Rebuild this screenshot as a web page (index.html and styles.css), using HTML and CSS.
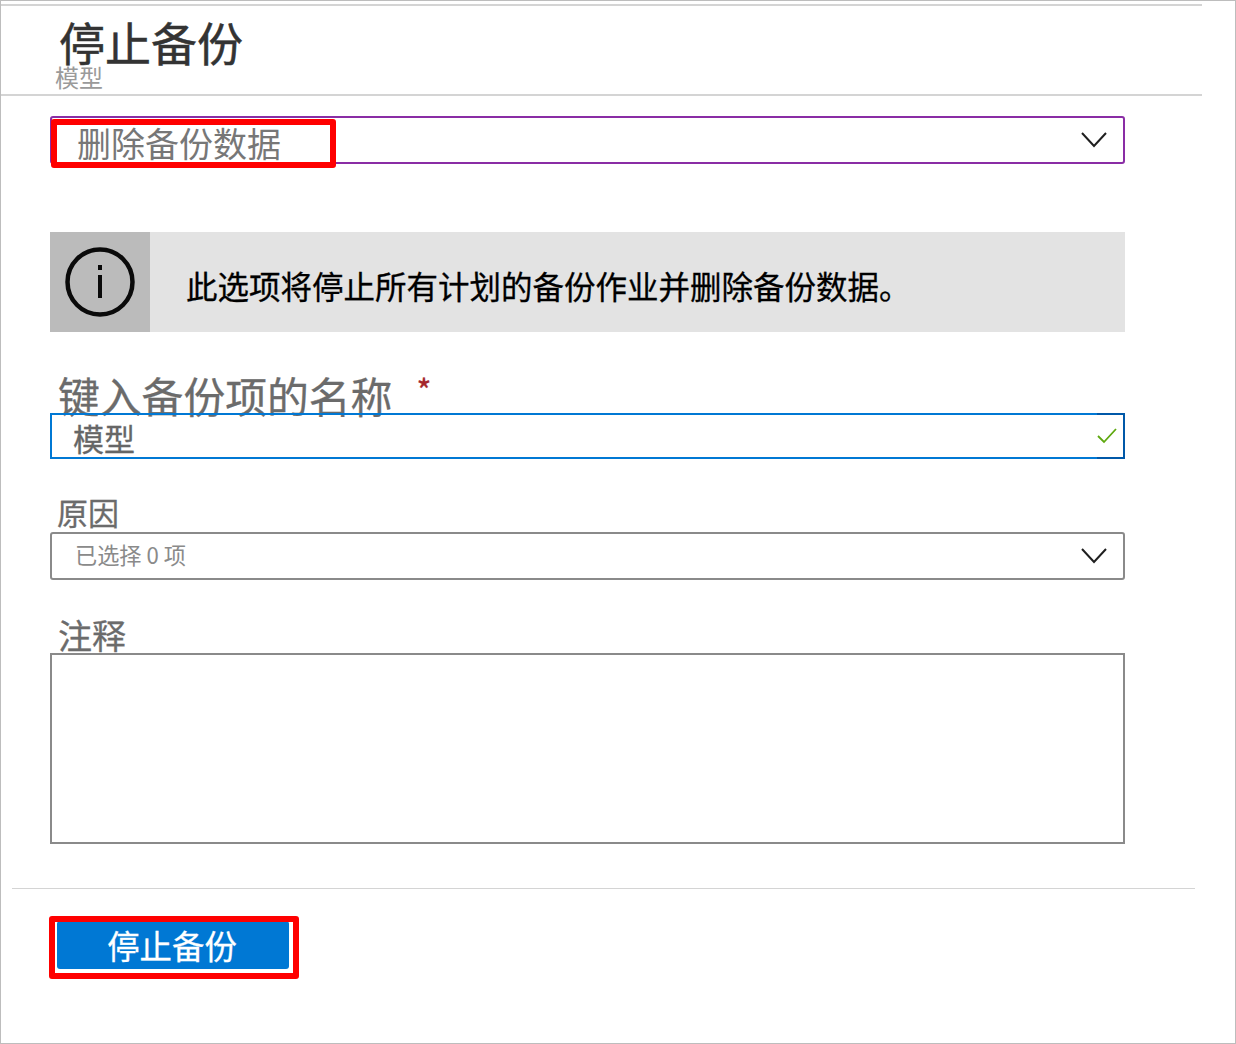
FILE: index.html
```html
<!DOCTYPE html>
<html lang="zh-CN">
<head>
<meta charset="utf-8">
<title>停止备份</title>
<link rel="stylesheet" href="styles.css">
</head>
<body>
<div class="frame">
  <div class="top-rule"></div>
  <header class="head">
    <h1 class="title">停止备份</h1>
    <div class="subtitle">模型</div>
  </header>
  <main class="form">
    <div class="select select-active">
      <span class="select-value-large">删除备份数据</span>
      <svg class="chevron" viewBox="0 0 26 16"><path d="M1 1 L13 14 L25 1" fill="none" stroke="#1f1f1f" stroke-width="2"/></svg>
      <div class="mark mark-select"></div>
    </div>
    <div class="info">
      <div class="info-icon">
        <svg viewBox="0 0 72 72" width="72" height="72"><circle cx="36" cy="36" r="32.5" fill="none" stroke="#0a0a0a" stroke-width="4.5"/><rect x="34" y="19" width="4" height="5" fill="#0a0a0a"/><rect x="34" y="29" width="4" height="23" fill="#0a0a0a"/></svg>
      </div>
      <p class="info-text">此选项将停止所有计划的备份作业并删除备份数据。</p>
    </div>
    <div class="label label-name"><span>键入备份项的名称</span><span class="required">*</span></div>
    <div class="input">
      <span class="input-value">模型</span>
      <div class="input-end">
        <svg class="check" viewBox="0 0 20 16"><path d="M1 8 L7 14 L19 1" fill="none" stroke="#5ea80f" stroke-width="1.8"/></svg>
      </div>
    </div>
    <div class="label label-reason">原因</div>
    <div class="select select-plain">
      <span class="select-value-small">已选择 0 项</span>
      <svg class="chevron" viewBox="0 0 26 16"><path d="M1 1 L13 14 L25 1" fill="none" stroke="#1f1f1f" stroke-width="2"/></svg>
    </div>
    <div class="label label-note">注释</div>
    <div class="textarea"></div>
  </main>
  <div class="foot-rule"></div>
  <div class="actions">
    <button class="primary" type="button">停止备份</button>
    <div class="mark mark-button"></div>
  </div>
</div>
</body>
</html>
```
FILE: styles.css
```css
* { box-sizing: border-box; }
html, body { margin: 0; padding: 0; background: #fff; }
body { font-family: "Noto Sans CJK SC", "Noto Sans", sans-serif; }
.frame {
  width: 1236px;
  height: 1044px;
  border: 1px solid #bdbdbd;
  overflow: hidden;
}
.top-rule { width: 1201px; height: 2px; margin-top: 3px; background: #d4d4d4; }
.head { width: 1201px; height: 90px; border-bottom: 2px solid #d4d4d4; }
.title {
  margin: 0 0 0 58px;
  font-size: 46px;
  font-weight: 400;
  line-height: 58px;
  height: 54px;
  color: #333;
  padding-top: 6px;
  -webkit-text-stroke: 0.5px #333;
}
.subtitle {
  margin-left: 54px;
  font-size: 24px;
  line-height: 30px;
  margin-top: 2px;
  color: #9a9a9a;
}
.form { width: 1075px; margin: 20px 0 0 49px; }
.select {
  position: relative;
  display: flex;
  align-items: center;
  justify-content: space-between;
  height: 48px;
  border: 2px solid #888;
  border-radius: 3px;
}
.select-active { border-color: #8a2da5; }
.select-plain { border-color: #8a8a8a; }
.select-value-large { margin-left: 25px; margin-top: 6px; font-size: 34px; line-height: 40px; color: #777; }
.select-value-small { margin-left: 23px; margin-top: -4px; font-size: 22.2px; line-height: 30px; color: #8a8a8a; }
.chevron { width: 26px; height: 16px; margin-right: 16px; }
.mark { position: absolute; border: 6px solid #f00; border-radius: 3px; }
.mark-select { left: -1px; top: 1px; width: 285px; height: 49px; }
.info { display: flex; height: 100px; margin-top: 68px; background: #e3e3e3; }
.info-icon {
  flex: none;
  display: flex;
  align-items: center;
  justify-content: center;
  width: 100px;
  background: #bbb;
}
.info-text {
  margin: 6px 0 0 36px;
  align-self: center;
  font-size: 31.5px;
  line-height: 40px;
  white-space: nowrap;
  color: #000;
  -webkit-text-stroke: 0.3px #000;
}
.label { color: #6b6b6b; white-space: nowrap; -webkit-text-stroke: 0.3px #6b6b6b; }
.label-name {
  display: flex;
  height: 49px;
  margin: 32px 0 0 8px;
  font-size: 41.8px;
  line-height: 62px;
}
.required {
  margin-left: 24px;
  font-size: 32px;
  line-height: 50px;
  color: #a4262c;
  -webkit-text-stroke: 0.3px #a4262c;
}
.input {
  position: relative;
  display: flex;
  align-items: stretch;
  justify-content: space-between;
  height: 46px;
  border: 2px solid #0078d4;
}
.input-value { margin-left: 21px; font-size: 31px; line-height: 45px; color: #666; -webkit-text-stroke: 0.3px #666; }
.input-end {
  display: flex;
  align-items: center;
  justify-content: flex-start;
  width: 28px;
  margin: -2px -2px -2px 0;
  border: 2px solid #0058a8;
  border-left: 0;
}
.check { width: 20px; height: 16px; }
.label-reason { height: 40px; margin: 33px 0 0 7px; font-size: 31px; line-height: 40px; }
.label-note { height: 41px; margin: 32px 0 0 8px; font-size: 34px; line-height: 46px; }
.textarea { height: 191px; border: 2px solid #8a8a8a; }
.foot-rule { width: 1183px; height: 1px; margin: 44px 0 0 11px; background: #d4d4d4; }
.actions { position: relative; width: 232px; margin: 32px 0 0 56px; }
.primary {
  display: block;
  width: 232px;
  height: 48px;
  padding: 0 2px 0 0;
  border: 0;
  border-radius: 3px;
  background: #0078d4;
  color: #fff;
  font: 400 32.4px/48px "Noto Sans CJK SC", sans-serif;
  -webkit-text-stroke: 0.3px #fff;
}
.mark-button { left: -8px; top: -5px; width: 250px; height: 63px; }
```
